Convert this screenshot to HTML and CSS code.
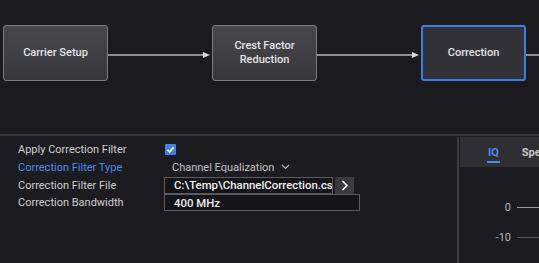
FILE: index.html
```html
<!DOCTYPE html>
<html lang="en">
<head>
    <meta charset="UTF-8">
    <title>Correction</title>
    <link rel="stylesheet" href="styles.css">
</head>
<body>
    <div class="flow">
        <div class="node">Carrier Setup</div>
        <div class="link"><div class="wire"></div><div class="head"></div></div>
        <div class="node">Crest Factor<br>Reduction</div>
        <div class="link"><div class="wire"></div><div class="head"></div></div>
        <div class="node active">Correction</div>
        <div class="link tail"><div class="wire"></div></div>
    </div>
    <div class="bottom">
        <div class="settings">
            <div class="label">Apply Correction Filter</div>
            <div class="value">
                <span class="check">
                    <svg width="11" height="11" viewBox="0 0 11 11"><path d="M2.5 5.8 L4.6 7.8 L8.6 3.4" fill="none" stroke="#fff" stroke-width="1.8"/></svg>
                </span>
            </div>
            <div class="label selected">Correction Filter Type</div>
            <div class="value select">
                <span>Channel Equalization</span>
                <svg width="9" height="6" viewBox="0 0 9 6"><path d="M1 1 L4.5 4.5 L8 1" fill="none" stroke="#b8b8b8" stroke-width="1.2"/></svg>
            </div>
            <div class="label">Correction Filter File</div>
            <div class="value">
                <div class="field file">C:\Temp\ChannelCorrection.csv</div>
                <div class="browse">
                    <svg width="8" height="11" viewBox="0 0 8 11"><path d="M1.5 1 L6 5.5 L1.5 10" fill="none" stroke="#fff" stroke-width="1.6"/></svg>
                </div>
            </div>
            <div class="label">Correction Bandwidth</div>
            <div class="value">
                <div class="field wide">400 MHz</div>
            </div>
        </div>
        <div class="plot">
            <div class="tabs">
                <div class="tab current">IQ</div>
                <div class="tab">Spe</div>
            </div>
            <div class="axis">
                <div class="tick"><span>0</span><div class="grid"></div></div>
                <div class="tick dim"><span>-10</span><div class="grid"></div></div>
            </div>
        </div>
    </div>
</body>
</html>
```

FILE: styles.css
```css
body {
    margin: 0;
    background-color: #1c1b20;
    color: #d0d0d0;
    font-family: Roboto, "Liberation Sans", sans-serif;
    font-size: 11px;
    overflow: hidden;
}
.flow {
    height: 136px;
    box-sizing: border-box;
    display: flex;
    align-items: flex-start;
    padding: 25px 0 0 3px;
    border-bottom: 2px solid #37363b;
    background-color: #1b1a1f;
}
.node {
    flex: none;
    width: 105px;
    height: 56px;
    box-sizing: border-box;
    border: 1px solid #7c7c80;
    border-radius: 3px;
    background: linear-gradient(#47474c, #37373c);
    display: flex;
    align-items: center;
    justify-content: center;
    text-align: center;
    font-size: 11px;
    font-weight: 500;
    line-height: 14px;
    color: #e4e4e4;
}
.node.active {
    border: 2px solid #3b7de2;
    background: #313137;
}
.link {
    flex: none;
    width: 104px;
    display: flex;
    align-items: center;
    margin-top: 27px;
    height: 6px;
}
.link.tail {
    width: 20px;
}
.wire {
    flex: 1;
    height: 2px;
    background-color: #8e8e90;
}
.head {
    width: 0;
    height: 0;
    border-top: 3px solid transparent;
    border-bottom: 3px solid transparent;
    border-left: 7px solid #d6d6d6;
    margin-right: 2px;
}
.bottom {
    display: flex;
    height: 127px;
}
.settings {
    width: 439px;
    flex: none;
    display: grid;
    grid-template-columns: 146px auto;
    grid-template-rows: 17px 18px 18px 17px;
    align-content: start;
    padding: 5px 0 0 18px;
}
.label {
    display: flex;
    align-items: center;
    color: #cfcfcf;
    white-space: nowrap;
}
.label.selected {
    color: #4a8bf0;
}
.value {
    display: flex;
    align-items: center;
    gap: 2px;
}
.check {
    width: 11px;
    height: 11px;
    margin-left: 1px;
    background-color: #3f83f2;
    border-radius: 1px;
    display: flex;
}
.select {
    padding-left: 8px;
    gap: 7px;
    color: #c4c4c4;
}
.field {
    height: 17px;
    box-sizing: border-box;
    border: 1px solid #5c5c60;
    background-color: #151418;
    color: #f0f0f0;
    font-size: 11.4px;
    font-weight: 500;
    padding-left: 9px;
    display: flex;
    align-items: center;
    overflow: hidden;
    white-space: nowrap;
}
.field.file {
    width: 169px;
}
.field.wide {
    width: 196px;
}
.browse {
    width: 19px;
    height: 17px;
    background-color: #3a3a3f;
    display: flex;
    align-items: center;
    justify-content: center;
}
.plot {
    flex: 1;
    border-left: 2px solid #3d3d41;
    margin-top: 1px;
    padding-left: 1px;
    display: flex;
    flex-direction: column;
}
.tabs {
    height: 30px;
    background-color: #2e2e33;
    display: flex;
    gap: 23px;
    padding-left: 28px;
    white-space: nowrap;
    overflow: hidden;
}
.tab {
    display: flex;
    align-items: center;
    font-weight: 700;
    color: #c9c9c9;
    position: relative;
}
.tab.current {
    color: #4a8bf0;
}
.tab.current::after {
    content: "";
    position: absolute;
    left: -1px;
    right: -1px;
    bottom: 4px;
    height: 2px;
    background-color: #4a8bf0;
}
.axis {
    padding-top: 25px;
}
.tick {
    height: 30px;
    display: flex;
    align-items: center;
    gap: 6px;
}
.tick span {
    width: 51px;
    text-align: right;
    color: #b4b4b4;
}
.grid {
    flex: 1;
    height: 1px;
    background-color: #9a9a9c;
}
.tick.dim .grid {
    background-color: #58585c;
}
```
